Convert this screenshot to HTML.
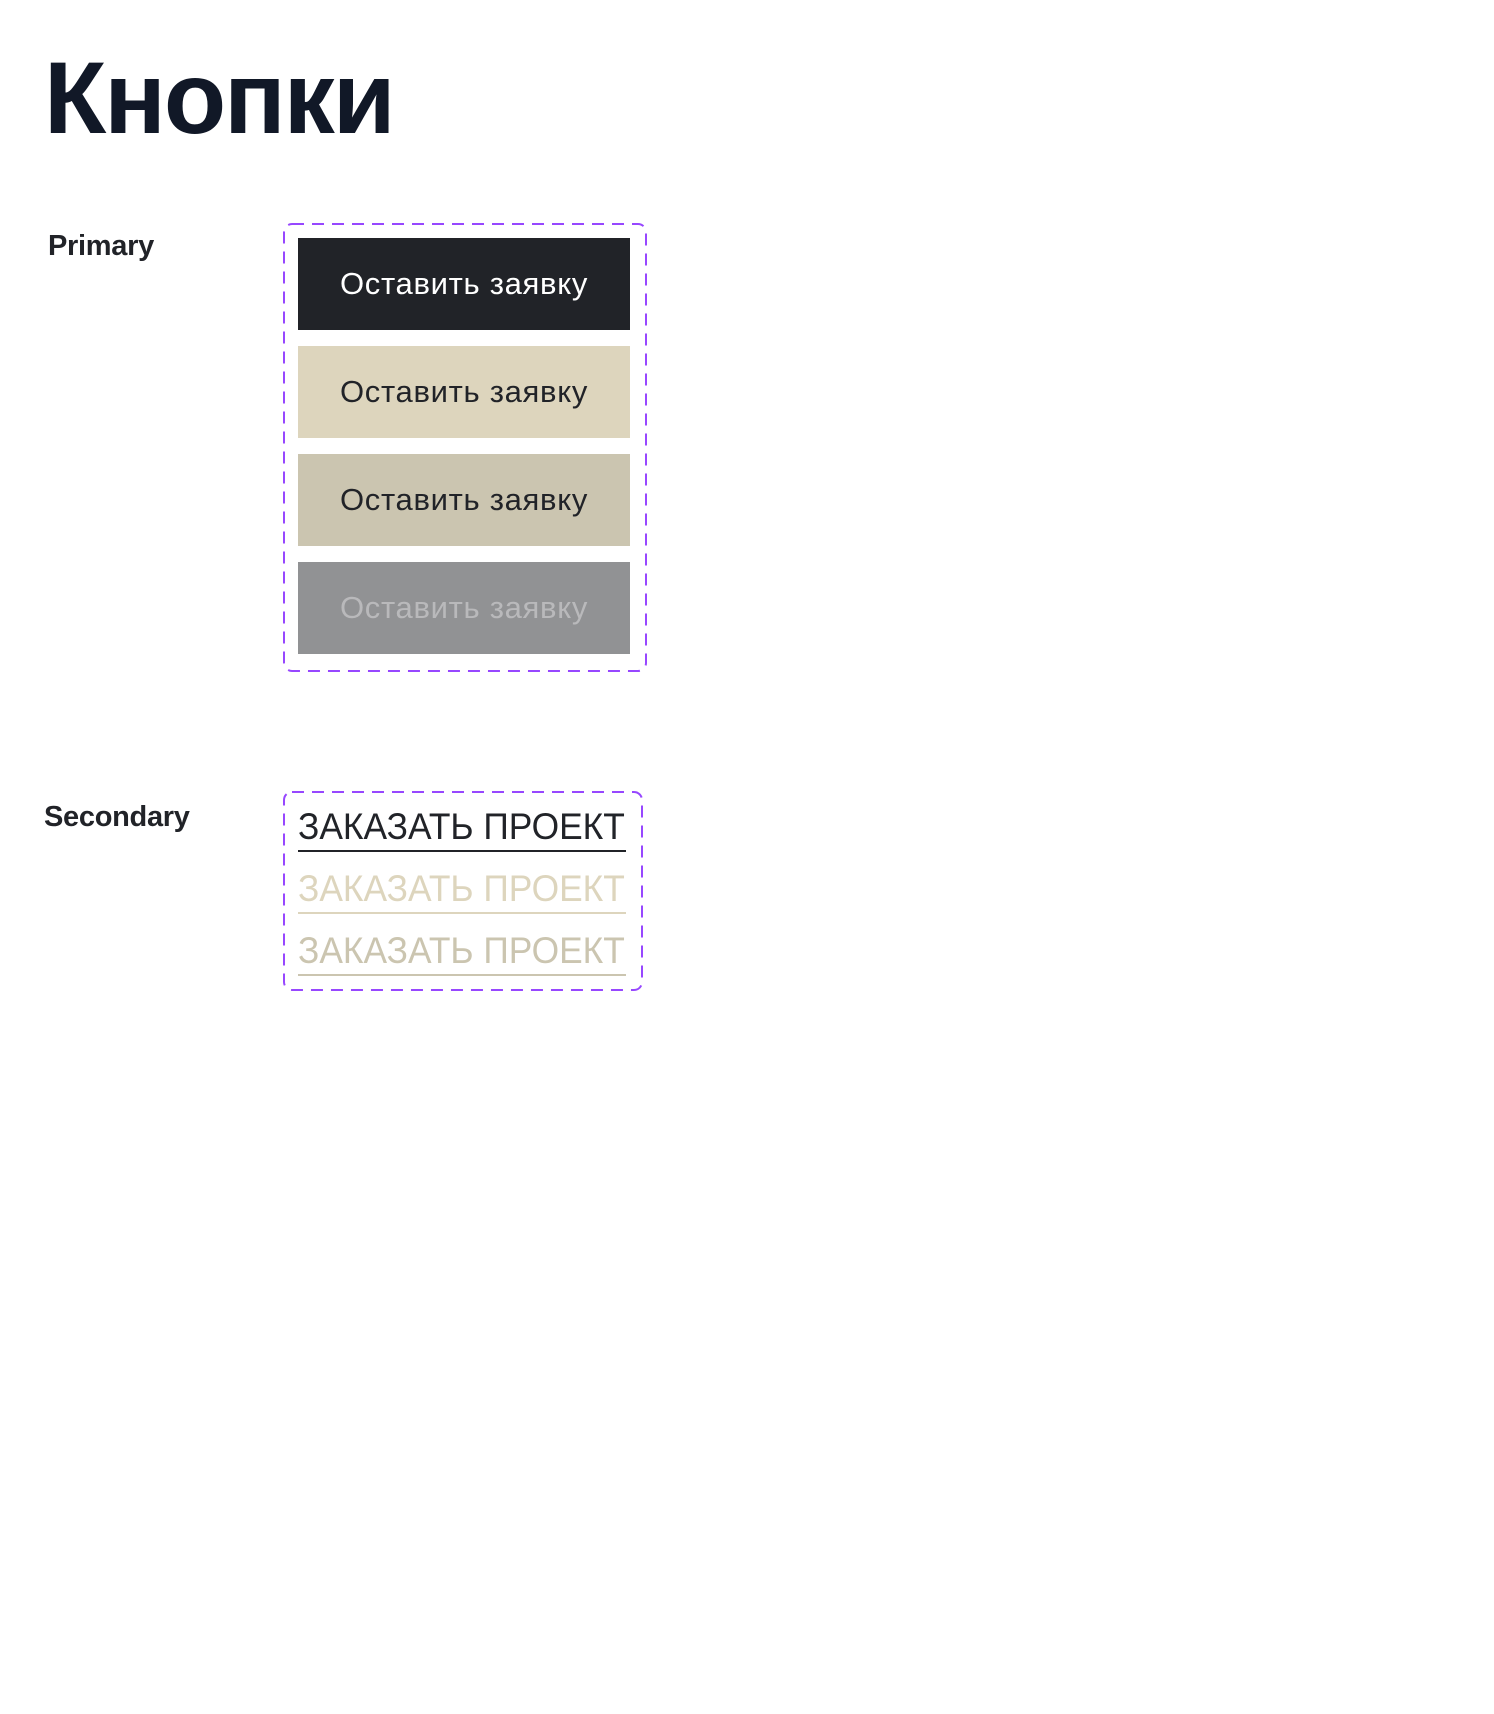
<!DOCTYPE html>
<html><head><meta charset="utf-8"><style>
body{margin:0;background:#fff;width:1494px;height:1714px;position:relative;font-family:"Liberation Sans","DejaVu Sans",sans-serif;}
.t{position:absolute;left:44px;top:38px;font-size:102px;font-weight:bold;color:#111827;line-height:120px;letter-spacing:-2px}
.lab{position:absolute;font-size:29px;font-weight:bold;color:#212328;line-height:34px;letter-spacing:-0.3px}
.box{position:absolute;box-sizing:border-box}
.box svg{position:absolute;left:0;top:0}
.btn{position:absolute;left:15px;width:332px;height:92px;font-size:31px;line-height:92px;text-align:center;color:#212328;letter-spacing:0.7px}
.sec{position:absolute;left:15px;width:328px;height:45px;padding-top:12px;border-bottom:2px solid}
.sec span{display:inline-block;font-size:37px;line-height:44px;white-space:nowrap;transform:scaleX(0.955);transform-origin:0 0}
</style></head><body>
<div class="t">Кнопки</div>
<div class="lab" style="left:48px;top:229px">Primary</div>
<div class="box" style="left:283px;top:223px;width:364px;height:449px">
<svg width="364" height="449"><rect x="1" y="1" width="362" height="447" rx="8" fill="none" stroke="#9747ff" stroke-width="2" stroke-dasharray="12 8"/></svg>
<div class="btn" style="top:15px;background:#212328;color:#fff">Оставить заявку</div>
<div class="btn" style="top:123px;background:#ddd5bd">Оставить заявку</div>
<div class="btn" style="top:231px;background:#cbc5b0">Оставить заявку</div>
<div class="btn" style="top:339px;background:#919294;color:#b9b9bb">Оставить заявку</div>
</div>
<div class="lab" style="left:44px;top:800px">Secondary</div>
<div class="box" style="left:283px;top:791px;width:360px;height:200px">
<svg width="360" height="200"><rect x="1" y="1" width="358" height="198" rx="8" fill="none" stroke="#9747ff" stroke-width="2" stroke-dasharray="12 8"/></svg>
<div class="sec" style="top:2px;color:#212328;border-color:#212328"><span>ЗАКАЗАТЬ ПРОЕКТ</span></div>
<div class="sec" style="top:64px;color:#ddd5bd;border-color:#ddd5bd"><span>ЗАКАЗАТЬ ПРОЕКТ</span></div>
<div class="sec" style="top:126px;color:#cbc5b0;border-color:#cbc5b0"><span>ЗАКАЗАТЬ ПРОЕКТ</span></div>
</div>
</body></html>
